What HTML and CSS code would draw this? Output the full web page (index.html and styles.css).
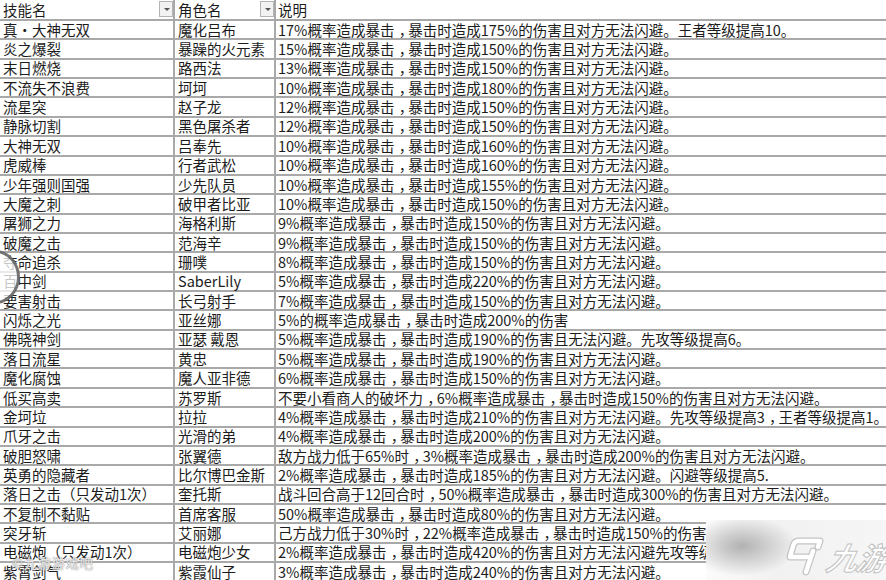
FILE: index.html
```html
<!DOCTYPE html>
<html lang="zh-CN">
<head>
<meta charset="utf-8">
<title>技能表</title>
<link rel="stylesheet" href="styles.css">
</head>
<body>
<div class="sheet">
  <div class="row head">
    <div class="c c1">技能名<span class="dd"></span></div>
    <div class="c c2">角色名<span class="dd"></span></div>
    <div class="c c3">说明</div>
  </div>
  <div class="row"><div class="c c1">真·大神无双</div><div class="c c2">魔化吕布</div><div class="c c3">17%概率造成暴击<span class="cm">，</span>暴击时造成175%的伤害且对方无法闪避。王者等级提高10。</div></div>
  <div class="row"><div class="c c1">炎之爆裂</div><div class="c c2">暴躁的火元素</div><div class="c c3">15%概率造成暴击<span class="cm">，</span>暴击时造成150%的伤害且对方无法闪避。</div></div>
  <div class="row"><div class="c c1">末日燃烧</div><div class="c c2">路西法</div><div class="c c3">13%概率造成暴击<span class="cm">，</span>暴击时造成150%的伤害且对方无法闪避。</div></div>
  <div class="row"><div class="c c1">不流失不浪费</div><div class="c c2">坷坷</div><div class="c c3">10%概率造成暴击<span class="cm">，</span>暴击时造成180%的伤害且对方无法闪避。</div></div>
  <div class="row"><div class="c c1">流星突</div><div class="c c2">赵子龙</div><div class="c c3">12%概率造成暴击<span class="cm">，</span>暴击时造成150%的伤害且对方无法闪避。</div></div>
  <div class="row"><div class="c c1">静脉切割</div><div class="c c2">黑色屠杀者</div><div class="c c3">12%概率造成暴击<span class="cm">，</span>暴击时造成150%的伤害且对方无法闪避。</div></div>
  <div class="row"><div class="c c1">大神无双</div><div class="c c2">吕奉先</div><div class="c c3">10%概率造成暴击<span class="cm">，</span>暴击时造成160%的伤害且对方无法闪避。</div></div>
  <div class="row"><div class="c c1">虎威棒</div><div class="c c2">行者武松</div><div class="c c3">10%概率造成暴击<span class="cm">，</span>暴击时造成160%的伤害且对方无法闪避。</div></div>
  <div class="row"><div class="c c1">少年强则国强</div><div class="c c2">少先队员</div><div class="c c3">10%概率造成暴击<span class="cm">，</span>暴击时造成155%的伤害且对方无法闪避。</div></div>
  <div class="row"><div class="c c1">大魔之刺</div><div class="c c2">破甲者比亚</div><div class="c c3">10%概率造成暴击<span class="cm">，</span>暴击时造成150%的伤害且对方无法闪避。</div></div>
  <div class="row"><div class="c c1">屠狮之力</div><div class="c c2">海格利斯</div><div class="c c3">9%概率造成暴击<span class="cm">，</span>暴击时造成150%的伤害且对方无法闪避。</div></div>
  <div class="row"><div class="c c1">破魔之击</div><div class="c c2">范海辛</div><div class="c c3">9%概率造成暴击<span class="cm">，</span>暴击时造成150%的伤害且对方无法闪避。</div></div>
  <div class="row"><div class="c c1">夺命追杀</div><div class="c c2">珊噗</div><div class="c c3">8%概率造成暴击<span class="cm">，</span>暴击时造成150%的伤害且对方无法闪避。</div></div>
  <div class="row"><div class="c c1">百中剑</div><div class="c c2">SaberLily</div><div class="c c3">5%概率造成暴击<span class="cm">，</span>暴击时造成220%的伤害且对方无法闪避。</div></div>
  <div class="row"><div class="c c1">要害射击</div><div class="c c2">长弓射手</div><div class="c c3">7%概率造成暴击<span class="cm">，</span>暴击时造成150%的伤害且对方无法闪避。</div></div>
  <div class="row"><div class="c c1">闪烁之光</div><div class="c c2">亚丝娜</div><div class="c c3">5%的概率造成暴击<span class="cm">，</span>暴击时造成200%的伤害</div></div>
  <div class="row"><div class="c c1">佛晓神剑</div><div class="c c2">亚瑟 戴恩</div><div class="c c3">5%概率造成暴击<span class="cm">，</span>暴击时造成190%的伤害且无法闪避。先攻等级提高6。</div></div>
  <div class="row"><div class="c c1">落日流星</div><div class="c c2">黄忠</div><div class="c c3">5%概率造成暴击<span class="cm">，</span>暴击时造成190%的伤害且对方无法闪避。</div></div>
  <div class="row"><div class="c c1">魔化腐蚀</div><div class="c c2">魔人亚非德</div><div class="c c3">6%概率造成暴击<span class="cm">，</span>暴击时造成150%的伤害且对方无法闪避。</div></div>
  <div class="row"><div class="c c1">低买高卖</div><div class="c c2">苏罗斯</div><div class="c c3">不要小看商人的破坏力<span class="cm">，</span>6%概率造成暴击<span class="cm">，</span>暴击时造成150%的伤害且对方无法闪避。</div></div>
  <div class="row"><div class="c c1">金坷垃</div><div class="c c2">拉拉</div><div class="c c3">4%概率造成暴击<span class="cm">，</span>暴击时造成210%的伤害且对方无法闪避。先攻等级提高3<span class="cm">，</span>王者等级提高1。</div></div>
  <div class="row"><div class="c c1">爪牙之击</div><div class="c c2">光滑的弟</div><div class="c c3">4%概率造成暴击<span class="cm">，</span>暴击时造成200%的伤害且对方无法闪避。</div></div>
  <div class="row"><div class="c c1">破胆怒啸</div><div class="c c2">张翼德</div><div class="c c3">敌方战力低于65%时<span class="cm">，</span>3%概率造成暴击<span class="cm">，</span>暴击时造成200%的伤害且对方无法闪避。</div></div>
  <div class="row"><div class="c c1">英勇的隐藏者</div><div class="c c2">比尔博巴金斯</div><div class="c c3">2%概率造成暴击<span class="cm">，</span>暴击时造成185%的伤害且对方无法闪避。闪避等级提高5.</div></div>
  <div class="row"><div class="c c1">落日之击（只发动1次）</div><div class="c c2">奎托斯</div><div class="c c3">战斗回合高于12回合时<span class="cm">，</span>50%概率造成暴击<span class="cm">，</span>暴击时造成300%的伤害且对方无法闪避。</div></div>
  <div class="row"><div class="c c1">不复制不黏贴</div><div class="c c2">首席客服</div><div class="c c3">50%概率造成暴击<span class="cm">，</span>暴击时造成80%的伤害且对方无法闪避。</div></div>
  <div class="row"><div class="c c1">突牙斩</div><div class="c c2">艾丽娜</div><div class="c c3">己方战力低于30%时<span class="cm">，</span>22%概率造成暴击<span class="cm">，</span>暴击时造成150%的伤害且对方无法闪避。</div></div>
  <div class="row"><div class="c c1">电磁炮（只发动1次）</div><div class="c c2">电磁炮少女</div><div class="c c3">2%概率造成暴击<span class="cm">，</span>暴击时造成420%的伤害且对方无法闪避先攻等级提高。</div></div>
  <div class="row"><div class="c c1">紫霄剑气</div><div class="c c2">紫霞仙子</div><div class="c c3">3%概率造成暴击<span class="cm">，</span>暴击时造成240%的伤害且对方无法闪避。</div></div>
</div>

<div class="ring"></div>
<div class="wm-left">©九游游戏吧</div>

<div class="logo-box">
  <svg class="logo-mark" width="38" height="40" viewBox="0 0 38 40">
    <g fill="none" stroke-linejoin="round" stroke-linecap="round">
      <path d="M12 5 L34 5 L32 11 M12 5 C9 5 8 7 7 10 L4 21 L22 21 M27 15 L20 36" stroke="#c4c4c4" stroke-width="7"/>
      <path d="M12 5 L34 5 L32 11 M12 5 C9 5 8 7 7 10 L4 21 L22 21 M27 15 L20 36" stroke="#ffffff" stroke-width="4.5"/>
    </g>
  </svg>
  <span class="logo-text">九游</span>
</div>
</body>
</html>
```

FILE: styles.css
```css
html, body {
  margin: 0;
  padding: 0;
  background: #ffffff;
  overflow: hidden;
}

body {
  width: 886px;
  height: 580px;
  position: relative;
  font-family: "Noto Sans CJK SC", "Noto Sans", sans-serif;
  font-size: 14.5px;
  color: #1c1c1c;
}

.sheet {
  display: flex;
  flex-direction: column;
  width: 886px;
  overflow: hidden;
}

.row {
  display: flex;
  height: 19.37px;
  box-sizing: border-box;
  border-top: 2px solid #a9a9a9;
}

.row.head {
  height: 19px;
  border-top: none;
}

.c {
  display: flex;
  align-items: center;
  box-sizing: border-box;
  white-space: nowrap;
  line-height: 18px;
  position: relative;
}

.c1 {
  width: 175px;
  flex: none;
  padding-left: 3px;
  border-right: 2px solid #a9a9a9;
}

.c2 {
  width: 101px;
  flex: none;
  padding-left: 3px;
  border-right: 2px solid #a9a9a9;
}

.c3 {
  flex: none;
  width: 700px;
  padding-left: 2px;
}

.cm {
  display: inline-block;
  width: 0.65em;
  padding-left: 0.3em;
  overflow: hidden;
  vertical-align: top;
}

.dd {
  position: absolute;
  right: 0;
  top: 1px;
  width: 14px;
  height: 16px;
  box-sizing: border-box;
  background: #f2f2f2;
  border: 1px solid #b4b4b4;
}

.dd::after {
  content: "";
  position: absolute;
  left: 4px;
  top: 6px;
  border-left: 3px solid transparent;
  border-right: 3px solid transparent;
  border-top: 3px solid #555;
}

.ring {
  position: absolute;
  left: -30px;
  top: 250px;
  width: 44px;
  height: 48px;
  border-radius: 50%;
  border: 3px solid rgba(70, 70, 70, 0.75);
  background: rgba(255, 255, 255, 0.75);
}

.wm-left {
  position: absolute;
  left: 12px;
  top: 553px;
  font-size: 13px;
  color: rgba(255, 255, 255, 0.8);
  text-shadow: 0 0 1px #888, 0 0 2px #aaa;
  letter-spacing: 1px;
}

.logo-box {
  position: absolute;
  left: 706px;
  top: 520px;
  width: 180px;
  height: 60px;
  display: flex;
  align-items: center;
  justify-content: flex-end;
  gap: 4px;
  box-sizing: border-box;
  background:
    radial-gradient(ellipse 55px 30px at 36px 26px, rgba(170, 170, 170, 0.9), rgba(235, 235, 235, 0) 100%),
    linear-gradient(90deg, #fbfbfb 0%, #f1f1f1 40%, #f6f6f6 100%);
}

.logo-mark {
  margin-top: 12px;
}

.logo-text {
  font-family: "Noto Sans CJK SC", sans-serif;
  font-size: 31px;
  font-style: italic;
  font-weight: 700;
  color: #ffffff;
  -webkit-text-stroke: 1px #c2c2c2;
  margin-top: 12px;
  margin-right: -2px;
  letter-spacing: -1px;
  transform: skewX(-14deg);
}
```
